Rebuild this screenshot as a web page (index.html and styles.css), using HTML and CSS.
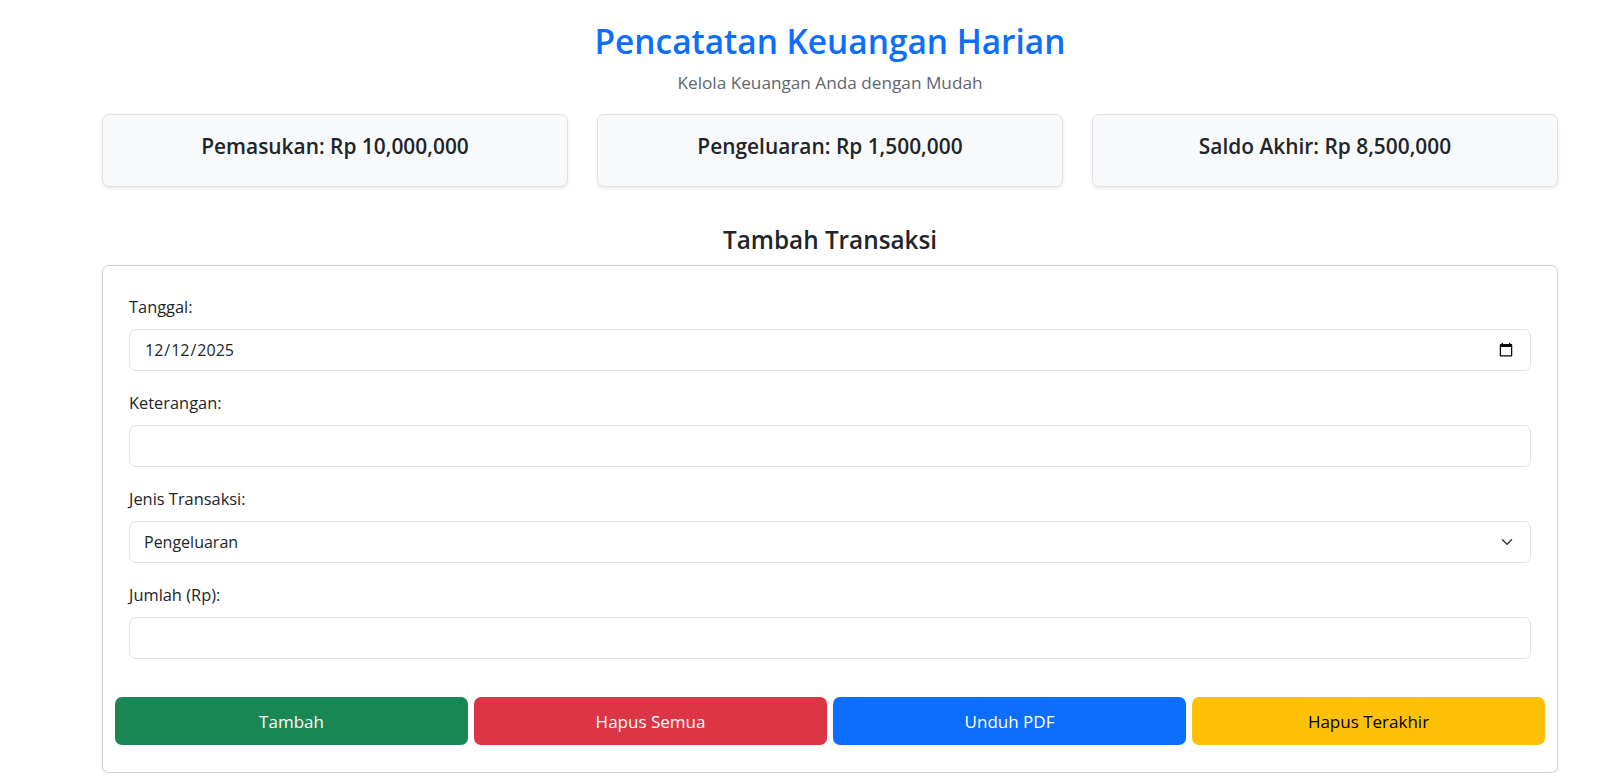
FILE: index.html
```html
<!DOCTYPE html>
<html lang="id">
<head>
<meta charset="utf-8">
<title>Pencatatan Keuangan Harian</title>
<link rel="stylesheet" href="styles.css">
</head>
<body>
<div class="page">
  <header class="header">
    <h1 class="title">Pencatatan Keuangan Harian</h1>
    <p class="subtitle">Kelola Keuangan Anda dengan Mudah</p>
  </header>

  <section class="summary">
    <div class="summary-card"><h4>Pemasukan: Rp 10,000,000</h4></div>
    <div class="summary-card"><h4>Pengeluaran: Rp 1,500,000</h4></div>
    <div class="summary-card"><h4>Saldo Akhir: Rp 8,500,000</h4></div>
  </section>

  <h3 class="section-title">Tambah Transaksi</h3>

  <form class="form-card">
    <div class="field">
      <label for="tanggal">Tanggal:</label>
      <input id="tanggal" class="control" type="date" value="2025-12-12">
    </div>
    <div class="field">
      <label for="keterangan">Keterangan:</label>
      <input id="keterangan" class="control" type="text">
    </div>
    <div class="field">
      <label for="jenis">Jenis Transaksi:</label>
      <div class="select-wrap">
        <select id="jenis" class="control select">
          <option>Pemasukan</option>
          <option selected>Pengeluaran</option>
        </select>
        <svg class="chevron" width="16" height="12" viewBox="0 0 16 16" aria-hidden="true"><path d="M2 5l6 6 6-6" fill="none" stroke="#343a40" stroke-width="2" stroke-linecap="round" stroke-linejoin="round"/></svg>
      </div>
    </div>
    <div class="field">
      <label for="jumlah">Jumlah (Rp):</label>
      <input id="jumlah" class="control" type="number">
    </div>
    <div class="actions">
      <button type="button" class="btn btn-green">Tambah</button>
      <button type="button" class="btn btn-red">Hapus Semua</button>
      <button type="button" class="btn btn-blue">Unduh PDF</button>
      <button type="button" class="btn btn-yellow">Hapus Terakhir</button>
    </div>
  </form>
</div>
</body>
</html>
```
FILE: styles.css
```css
* { box-sizing: border-box; }
html, body { margin: 0; background: #fff; }
body {
  font-family: "Open Sans", "Noto Sans", "Liberation Sans", sans-serif;
  color: #212529;
  font-size: 16px;
}
.page {
  padding: 17px 59px 0 102px;
}
.header { text-align: center; }
.title {
  margin: 0;
  font-size: 33.4px;
  font-weight: 600;
  line-height: 48px;
  color: #0d6efd;
}
.subtitle {
  margin: 6px 0 0;
  font-size: 17.2px;
  line-height: 24px;
  color: #5f666d;
}
.summary {
  display: grid;
  grid-template-columns: repeat(3, 1fr);
  gap: 29px;
  margin-top: 19px;
}
.summary-card {
  height: 73px;
  background: #f8f9fa;
  border: 1px solid #dee2e6;
  border-radius: 7px;
  box-shadow: 0 2px 4px rgba(0,0,0,0.08);
  display: flex;
  justify-content: center;
  padding-top: 16px;
}
.summary-card h4 {
  margin: 0;
  font-size: 20.9px;
  font-weight: 600;
  line-height: 30px;
}
.section-title {
  margin: 36px 0 8px;
  text-align: center;
  font-size: 24.3px;
  font-weight: 600;
  line-height: 34px;
}
.form-card {
  border: 1px solid #cfd3d7;
  border-radius: 7px;
  padding: 29px 26px 27px;
  box-shadow: 0 1px 3px rgba(0,0,0,0.1);
}
.field { margin-bottom: 20px; }
.field label {
  display: block;
  font-size: 16.4px;
  line-height: 24px;
  margin-bottom: 10px;
}
.control {
  display: block;
  width: 100%;
  height: 42px;
  border: 1px solid #dee2e6;
  border-radius: 7px;
  padding: 0 14px;
  font-family: inherit;
  font-size: 16px;
  color: #212529;
  background: #fff;
}
.select-wrap { position: relative; }
.select {
  appearance: none;
  -webkit-appearance: none;
}
.chevron {
  position: absolute;
  right: 16px;
  top: 15px;
  pointer-events: none;
}
.actions {
  display: flex;
  gap: 6px;
  margin: 38px -14px 0 -14px;
}
.btn {
  flex: 1;
  height: 48px;
  border: none;
  border-radius: 7px;
  font-family: inherit;
  font-size: 17px;
  color: #fff;
}
.btn-green { background: #198754; }
.btn-red { background: #dc3545; }
.btn-blue { background: #0d6efd; }
.btn-yellow { background: #ffc107; color: #000; }
```
